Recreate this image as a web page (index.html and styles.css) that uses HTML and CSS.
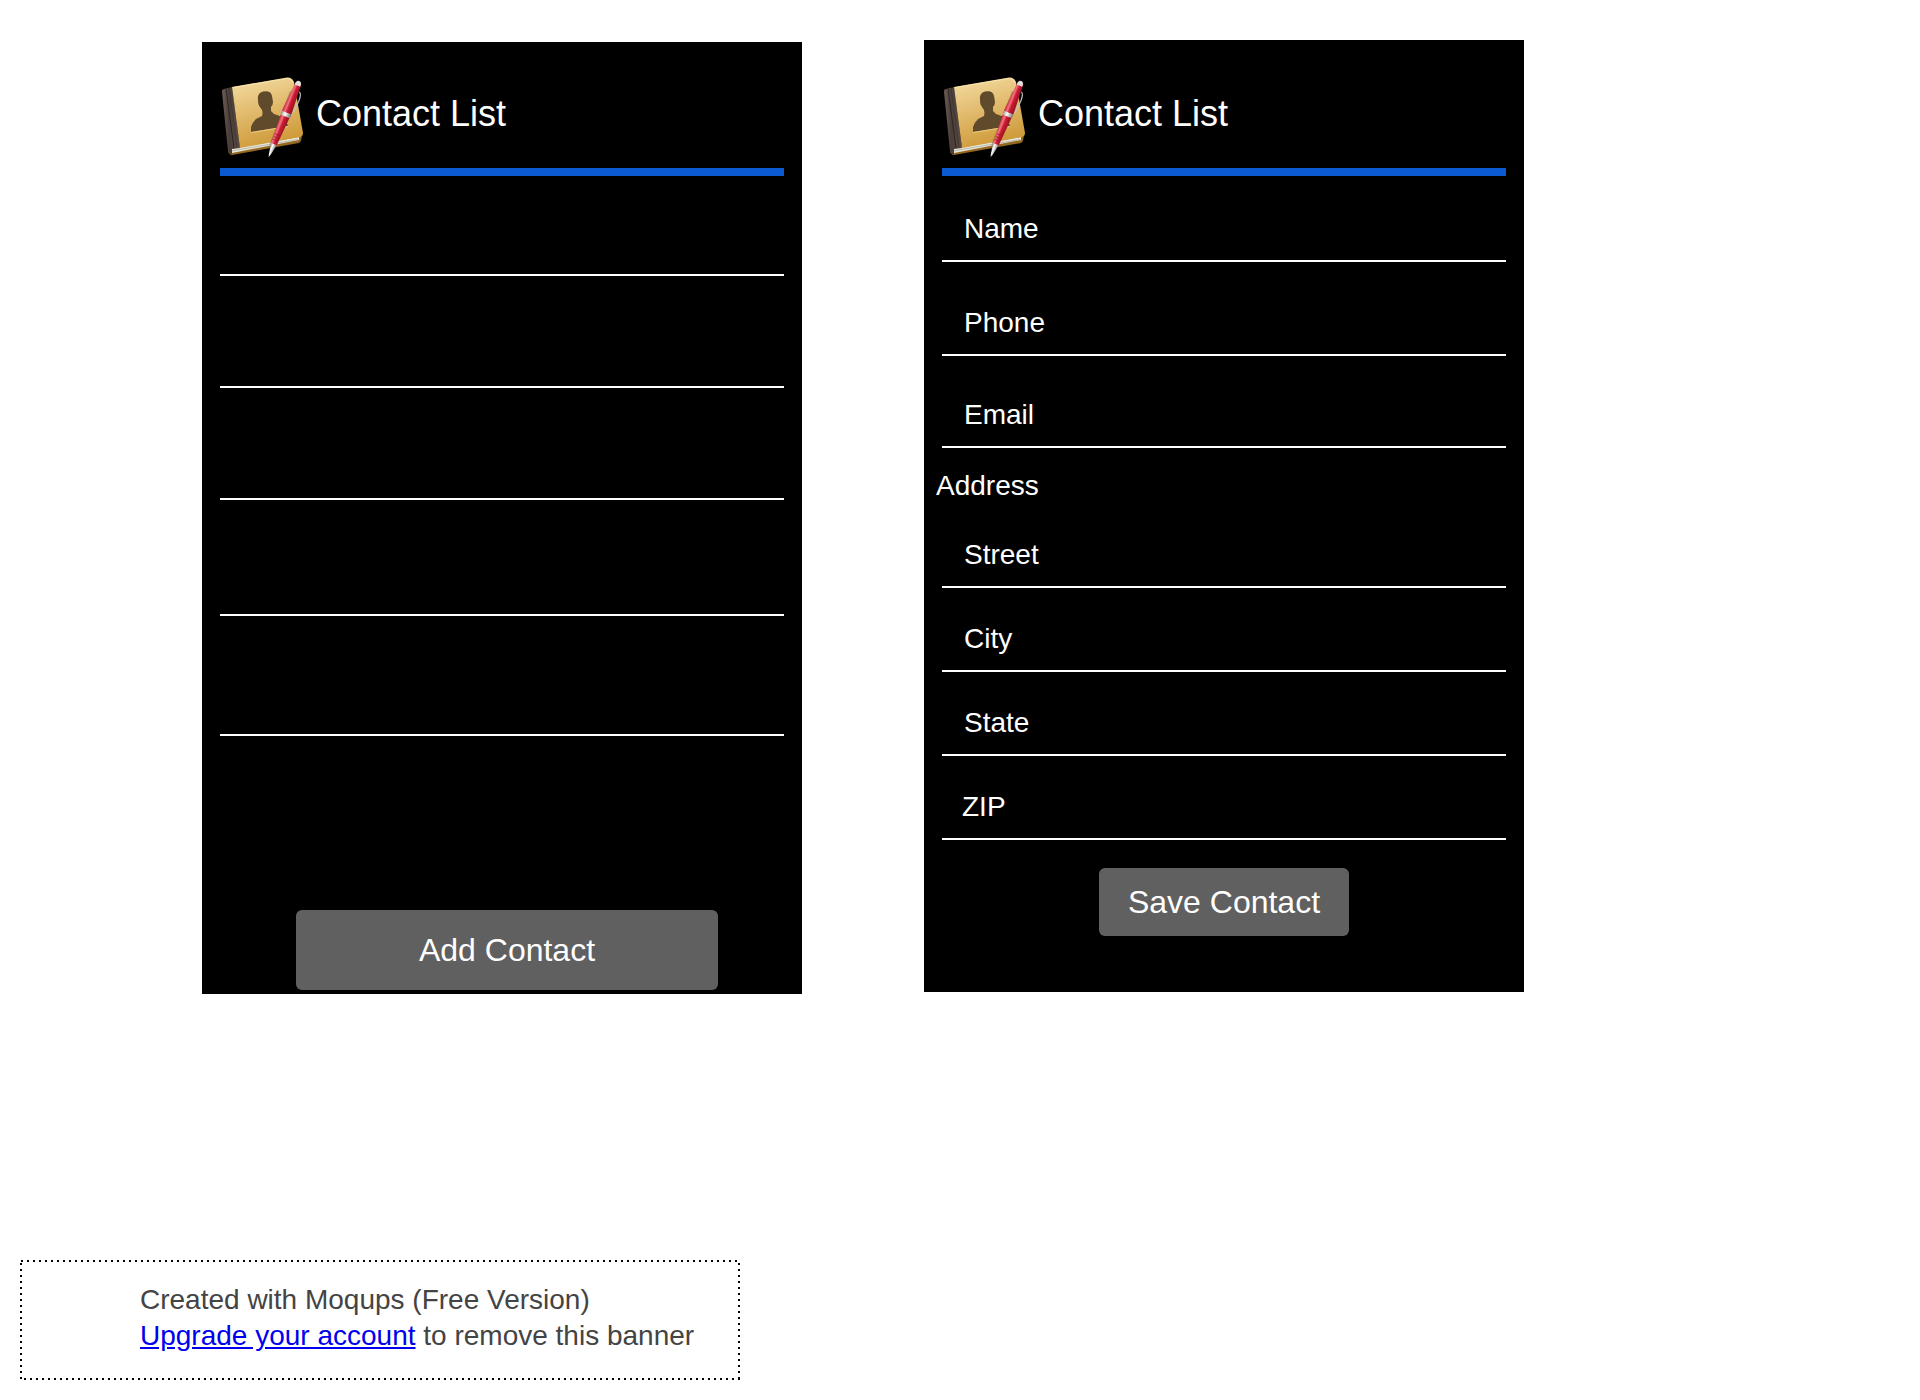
FILE: index.html
```html
<!DOCTYPE html>
<html lang="en">
<head>
<meta charset="utf-8">
<meta name="viewport" content="width=device-width, initial-scale=1">
<title>Contact List</title>
<link rel="stylesheet" href="styles.css">
</head>
<body>
<svg class="defs" aria-hidden="true">
  <defs>
    <linearGradient id="cover" x1="0" y1="0" x2="0.3" y2="1">
      <stop offset="0" stop-color="#f5dfa6"/><stop offset="0.5" stop-color="#e2bc70"/><stop offset="1" stop-color="#d09c3c"/>
    </linearGradient>
    <linearGradient id="spine" x1="0" y1="0" x2="1" y2="0">
      <stop offset="0" stop-color="#6b5b54"/><stop offset="0.4" stop-color="#4a3e3a"/><stop offset="1" stop-color="#5a4b44"/>
    </linearGradient>
    <linearGradient id="barrel" x1="0" y1="0" x2="1" y2="0">
      <stop offset="0" stop-color="#cc2036"/><stop offset="0.3" stop-color="#ee7682"/><stop offset="0.5" stop-color="#d01c34"/><stop offset="1" stop-color="#8e1020"/>
    </linearGradient>
    <linearGradient id="metal" x1="0" y1="0" x2="1" y2="0">
      <stop offset="0" stop-color="#999"/><stop offset="0.4" stop-color="#fff"/><stop offset="1" stop-color="#777"/>
    </linearGradient>
    <symbol id="book" viewBox="0 0 84 84">
      <path d="M9 73 L81 58 Q83 65 79 68 L12 80 Q9 80 8 76Z" fill="#94691f"/>
      <path d="M10 74 L79 62 L79 65 L12 78Z" fill="#e8e7dc"/>
      <path d="M11 76 L78 64.500" stroke="#9a988c" stroke-width="0.6"/>
      <path d="M2 17 Q2 14 4 14 L12 12 L20 73 L12 74 L12 79 Q9 80 8 76Z" fill="url(#spine)"/>
      <path d="M6 14 L14 73" stroke="#2d2421" stroke-width="1"/>
      <path d="M9 13 L17 72" stroke="#3a2f2b" stroke-width="0.6"/>
      <path d="M12 12 L67 2.500 Q72 2 74 7 L83 58 Q83 61 80 62 L20 73Z" fill="url(#cover)"/>
      <path d="M13 12.500 L67 3.500 Q71 3 73 8" fill="none" stroke="#fbe8b8" stroke-width="0.8"/>
      <path d="M31 57 L31 52 Q32 48 36 44 L42 41 Q43 38 42 35 L40 32 Q38 30 38 25 Q37 18 43 16.500 Q51 15 52 21 L53 27 Q53 30 51 32 L51 36 Q53 39 57 40 Q64 42 66 46 L68 51Z" fill="#5f4a2b"/>
      <path d="M31 57.500 L68 51.500" stroke="#f2d48c" stroke-width="0.8"/>
      <g transform="translate(79 7) rotate(22)">
        <path d="M-5 12 H-3 V62 L0 79 L-4 68Z" fill="#3d2508" opacity="0.3"/>
        <path d="M4 9 Q7 10 7 18 L6 30 L4 31" fill="none" stroke="#c2c2c2" stroke-width="1.200"/>
        <path d="M-3 2 Q-3 0 0 0 Q3 0 3 2 L5 31 L3 68 L-3 68 L-5 31Z" fill="url(#barrel)"/>
        <path d="M-3 4 Q-3 -1 0 -1 Q3 -1 3 4Z" fill="#e5dede"/>
        <path d="M-5 33 H5 V37 H-5Z" fill="url(#metal)"/>
        <path d="M-3 57 H3 M-3 60 H3 M-3 63 H3" stroke="#9c1426" stroke-width="0.7"/>
        <path d="M-3 67 H3 L1 78 L0 81 L-1 78Z" fill="url(#metal)"/>
      </g>
    </symbol>
  </defs>
</svg>
<main class="board">
  <section class="screen screen-list">
    <header class="bar">
      <svg class="logo" aria-hidden="true"><use href="#book"/></svg>
      <h1 class="title">Contact List</h1>
    </header>
    <ul class="contacts">
      <li class="contact"></li>
      <li class="contact"></li>
      <li class="contact"></li>
      <li class="contact tall"></li>
      <li class="contact taller"></li>
    </ul>
    <button class="btn btn-add" type="button">Add Contact</button>
  </section>

  <form class="screen screen-form">
    <header class="bar bar-form">
      <svg class="logo" aria-hidden="true"><use href="#book"/></svg>
      <h1 class="title">Contact List</h1>
    </header>
    <div class="field first"><label for="name">Name</label><input id="name" type="text"></div>
    <div class="field phone"><label for="phone">Phone</label><input id="phone" type="tel"></div>
    <div class="field email"><label for="email">Email</label><input id="email" type="email"></div>
    <fieldset class="address">
      <legend class="legend">Address</legend>
      <div class="field"><label for="street">Street</label><input id="street" type="text"></div>
      <div class="field"><label for="city">City</label><input id="city" type="text"></div>
      <div class="field"><label for="state">State</label><input id="state" type="text"></div>
      <div class="field zip"><label for="zip">ZIP</label><input id="zip" type="text"></div>
    </fieldset>
    <button class="btn btn-save" type="button">Save Contact</button>
  </form>
</main>
<footer class="banner">
  <p class="note">Created with Moqups (Free Version)<br><a href="#upgrade">Upgrade your account</a> to remove this banner</p>
</footer>
</body>
</html>
```
FILE: styles.css
```css
* {
  box-sizing: border-box;
}

body {
  margin: 0;
  background: #fff;
  font-family: "Liberation Sans", Arial, sans-serif;
  font-size: 28px;
  line-height: 36px;
}

.defs {
  position: absolute;
  width: 0;
  height: 0;
}

.board {
  display: flex;
  flex-wrap: wrap;
  align-items: flex-start;
  gap: 122px;
  padding: 40px 20px 0 202px;
}

.screen {
  display: flex;
  flex-direction: column;
  width: 100%;
  max-width: 600px;
  padding: 0 18px;
  background: #000;
  color: #fff;
}

.screen-list {
  margin-top: 2px;
  padding-bottom: 4px;
}

.screen-form {
  padding-bottom: 56px;
}

.bar {
  display: flex;
  align-items: center;
  gap: 12px;
  padding: 33px 0 9px;
  border-bottom: 8px solid #0b5ad2;
}

.bar-form {
  padding-top: 35px;
}

.logo {
  width: 84px;
  height: 84px;
}

.title {
  margin: 0;
  padding-bottom: 6px;
  font-size: 36px;
  font-weight: 400;
}

.contacts {
  margin: 0;
  padding: 0;
  list-style: none;
}

.contact {
  height: 112px;
  border-bottom: 2px solid #fff;
}

.contact:first-child {
  height: 100px;
}

.contact.tall {
  height: 116px;
}

.contact.taller {
  height: 120px;
}

.field {
  display: flex;
  align-items: center;
  margin-top: 33px;
  padding: 0 0 13px 22px;
  border-bottom: 2px solid #fff;
}

.field.first {
  margin-top: 35px;
}

.field.phone {
  margin-top: 43px;
}

.field.email {
  margin-top: 41px;
}

.field.zip {
  padding-left: 20px;
}

.field input {
  flex: 1;
  min-width: 0;
  height: 36px;
  padding: 0 8px;
  border: 0;
  outline: 0;
  background: transparent;
  color: #fff;
  font: inherit;
}

.address {
  min-width: 0;
  margin: 20px 0 0;
  padding: 0;
  border: 0;
}

.legend {
  margin-left: -6px;
  padding: 0;
}

.btn {
  border: 0;
  border-radius: 6px;
  background: #606060;
  color: #fff;
  font: inherit;
  font-size: 32px;
}

.btn-add {
  width: 100%;
  max-width: 422px;
  height: 80px;
  margin: 174px 0 0 76px;
}

.btn-save {
  align-self: center;
  width: 250px;
  height: 68px;
  margin-top: 28px;
  padding: 0;
}

.banner {
  max-width: 720px;
  margin: 266px 20px 0;
  padding: 22px 20px 26px 120px;
  background:
    repeating-linear-gradient(90deg, transparent 0 1px, #000 1px 3px, transparent 3px 6px) top / 100% 2px no-repeat,
    repeating-linear-gradient(90deg, transparent 0 4px, #000 4px 6px) bottom / 100% 2px no-repeat,
    repeating-linear-gradient(transparent 0 3px, #000 3px 5px, transparent 5px 6px) left / 2px 100% no-repeat,
    repeating-linear-gradient(transparent 0 3px, #000 3px 5px, transparent 5px 6px) right / 2px 100% no-repeat;
}

.note {
  margin: 0;
  color: #444;
}

.note a {
  color: #00e;
  text-decoration: underline;
}
```
